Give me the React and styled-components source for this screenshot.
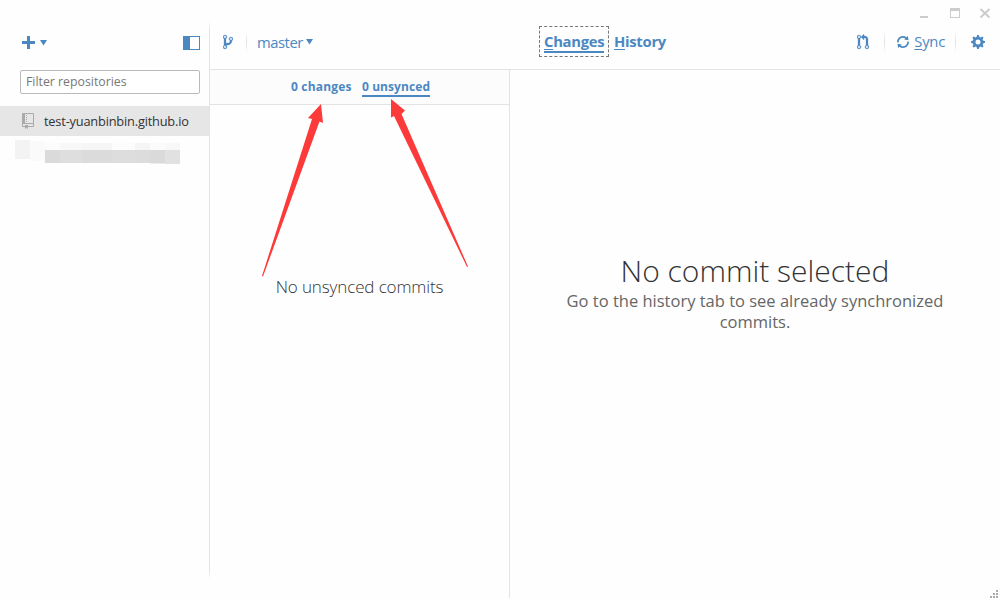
import React from "react";
import styled, { createGlobalStyle, css } from "styled-components";

const blue = "#4b88c2";

const GlobalStyle = createGlobalStyle`
  * { box-sizing: border-box; }
  body { margin: 0; background: #fefefe; font-family: "Open Sans", "Noto Sans", sans-serif; color: #333; overflow: hidden; }
`;

const Window = styled.div`
  position: relative;
  display: grid;
  grid-template-columns: 210px 1fr;
  width: 1000px;
  height: 600px;
`;

const Sidebar = styled.aside`
  display: flex;
  flex-direction: column;
  padding-top: 24px;
  background: linear-gradient(to bottom, transparent 21px, #e3e3e3 30px, #e3e3e3 571px, transparent 579px) right / 1px 100% no-repeat;
`;

const SideTools = styled.div`
  display: flex;
  align-items: center;
  height: 37px;
  margin-bottom: 1px;
  padding: 0 10px 0 22px;
  color: ${blue};
`;

const Icon = styled.svg`
  display: block;
  flex: none;
  fill: currentColor;
  margin-left: ${(p) => p.$left || 0}px;
`;

const WindowControls = styled(Icon)`
  color: #ccc;
`;

const Filter = styled.input`
  width: 180px;
  height: 24px;
  margin: 8px 0 12px 20px;
  padding: 0 5px 2px;
  border: 1px solid #bababa;
  border-radius: 2px;
  outline: none;
  background: #fff;
  font: 12.3px "Open Sans", sans-serif;
  &::placeholder { color: #777; opacity: 1; }
`;

const Repo = styled.div`
  display: flex;
  align-items: center;
  width: 209px;
  height: 30px;
  padding-left: 22px;
  background: #e6e6e6;
  color: #aaa;
`;

const RepoName = styled.span`
  margin-left: 9px;
  font-size: 12.8px;
  letter-spacing: -0.19px;
  color: #333;
  white-space: nowrap;
`;

const Redacted = styled.div`
  display: flex;
  margin: 4px 0 0 15px;
`;

const Mosaic = styled.div`
  display: grid;
  grid-template-columns: 15px 22px 30px 23px 15px 15px 15px;
  grid-template-rows: 7px 13px 1px;
  margin-top: 3px;
`;

const Block = styled.i`
  width: ${(p) => (p.$w ? `${p.$w}px` : "auto")};
  height: ${(p) => (p.$h ? `${p.$h}px` : "auto")};
  margin-top: ${(p) => p.$top || 0}px;
  background: ${(p) => p.$tone};
`;

const Main = styled.main`
  display: flex;
  flex-direction: column;
  min-width: 0;
`;

const TitleBar = styled.div`
  display: flex;
  justify-content: flex-end;
  height: 24px;
  padding: 8px 9px 0 0;
`;

const Toolbar = styled.header`
  display: grid;
  grid-template-columns: 329px 1fr auto;
  height: 46px;
  border-bottom: 1px solid #e3e3e3;
  color: ${blue};
`;

const Group = styled.div`
  display: flex;
  align-items: center;
  height: 36px;
`;

const Divider = styled.i`
  width: 1px;
  height: 22px;
  margin-left: ${(p) => p.$left}px;
  background: linear-gradient(transparent, #dedede 50%, transparent);
`;

const Label = styled.span`
  margin-left: ${(p) => p.$left}px;
  padding-bottom: ${(p) => p.$raise || 0}px;
  font-size: 14.8px;
  line-height: 20px;
  letter-spacing: ${(p) => p.$track || 0}px;
  white-space: nowrap;
`;

const Tab = styled.button`
  height: 31px;
  padding: 0 5px;
  border: 0;
  background: none;
  color: inherit;
  font: 700 14.8px/18px "Open Sans", sans-serif;
  letter-spacing: -0.28px;
  span { display: block; padding-bottom: 1px; border-bottom: 2px solid transparent; white-space: nowrap; }
  ${(p) => p.$active && css`
    width: 70px;
    margin-bottom: 2px;
    border: 1px dashed #777;
    padding: 2px 4px 0;
    span { border-color: ${blue}; }
  `}
`;

const Key = styled.u`
  text-decoration-thickness: 1px;
  text-underline-offset: 2px;
`;

const Body = styled.div`
  flex: 1;
  display: grid;
  grid-template-columns: 300px 1fr;
`;

const Commits = styled.section`
  display: flex;
  flex-direction: column;
  height: 528px;
  border-right: 1px solid #e3e3e3;
`;

const SubTabs = styled.nav`
  display: flex;
  height: 35px;
  padding: 8px 0 0 81px;
  background: #fcfcfc;
  border-bottom: 1px solid #e3e3e3;
`;

const SubTab = styled.a`
  height: 19px;
  width: ${(p) => p.$w}px;
  margin-right: 10px;
  border-bottom: 2px solid ${(p) => (p.$active ? blue : "transparent")};
  color: ${blue};
  font-size: 12px;
  font-weight: 700;
  line-height: 18px;
  letter-spacing: ${(p) => p.$track || 0}px;
  white-space: nowrap;
`;

const Empty = styled.p`
  margin: 169px 0 0;
  text-align: center;
  font-size: 17px;
  font-weight: 300;
  line-height: 26px;
  letter-spacing: -0.12px;
`;

const Detail = styled.section`
  padding: 181px 45px 0;
  text-align: center;
`;

const Headline = styled.h1`
  margin: 0;
  font-size: 30px;
  font-weight: 300;
  line-height: 40px;
  white-space: nowrap;
`;

const Hint = styled.p`
  margin: -1px 0 0;
  font-size: 16.5px;
  line-height: 21px;
  color: #666;
`;

const Arrows = styled.svg`
  position: absolute;
  left: 250px;
  top: 95px;
  fill: #fd3a3a;
`;

const Grip = styled.svg`
  position: absolute;
  right: 0;
  bottom: 0;
  fill: #aaa;
`;

const maskTones = [
  "#fcfcfc", "#f8f8f8", "#f6f6f6", "#fcfcfc", "#f5f5f5", "#fbfbfb", "#f8f8f8",
  "#dadada", "#dedede", "#dbdbdb", "#dedddd", "#dcdcdc", "#dadada", "#e1e1e1",
  "transparent", "transparent", "transparent", "transparent", "transparent", "#ececec", "#e1e1e1",
];

const Caret = ({ left }) => (
  <Icon $left={left} width="7" height="6" viewBox="0 0 7 6"><path d="M0 0h7L3.5 5.5z" /></Icon>
);

export default function App() {
  return (
    <Window>
      <GlobalStyle />
      <Sidebar>
        <SideTools>
          <Icon width="13" height="13" viewBox="0 0 13 13"><path d="M5 0h3v5h5v3H8v5H5V8H0V5h5z" /></Icon>
          <Caret left={5} />
          <Icon $left={136} width="17" height="14" viewBox="0 0 17 14"><path fillRule="evenodd" d="M0 0h17v14H0zM7 1v12h9V1z" /></Icon>
        </SideTools>
        <Filter placeholder="Filter repositories" />
        <Repo>
          <Icon width="13" height="16" viewBox="0 0 13 16">
            <path fillRule="evenodd" d="M1 0h10a1 1 0 0 1 1 1v12a1 1 0 0 1-1 1H6v2l-1.500-1.200L3 16v-2H1a1 1 0 0 1-1-1V1a1 1 0 0 1 1-1zM3 1v9h8V1zM1 11v2h2v-1h3v1h5v-2z" />
            <path d="M4 2h1v1H4zM4 4h1v1H4zM4 6h1v1H4zM4 8h1v1H4z" />
          </Icon>
          <RepoName>test-yuanbinbin.github.io</RepoName>
        </Repo>
        <Redacted>
          <Block $w={15} $h={19} $tone="#f3f3f3" />
          <Block $w={15} $h={20} $top={1} $tone="#fafafa" />
          <Mosaic>
            {maskTones.map((tone, i) => <Block key={i} $tone={tone} />)}
          </Mosaic>
        </Redacted>
      </Sidebar>
      <Main>
        <TitleBar>
          <WindowControls width="72" height="12" viewBox="0 0 72 12">
            <path fillRule="evenodd" d="M1 8h8v2H1zM31 0h10v10H31zM32 3v6h8V3z" />
            <path d="M61.500 1l9 8.500M70.500 1l-9 8.500" stroke="currentColor" strokeWidth="2" />
          </WindowControls>
        </TitleBar>
        <Toolbar>
          <Group>
            <Icon $left={13} width="10" height="16" viewBox="0 0 10 16"><path d="M10 5c0-1.110-.89-2-2-2a1.993 1.993 0 0 0-1 3.720v.3c-.02.52-.23.98-.63 1.380-.4.4-.86.61-1.380.63-.83.02-1.480.16-2 .45V4.720a1.993 1.993 0 0 0-1-3.720C.88 1 0 1.890 0 3a2 2 0 0 0 1 1.720v6.560c-.59.35-1 .99-1 1.720 0 1.110.89 2 2 2 1.110 0 2-.89 2-2 0-.53-.2-1-.53-1.360.09-.06.48-.41.59-.47.25-.11.56-.17.94-.17 1.050-.05 1.950-.45 2.750-1.250S8.950 7.770 9 6.730h-.02C9.590 6.370 10 5.730 10 5zM2 1.800c.66 0 1.200.55 1.200 1.200 0 .65-.55 1.200-1.200 1.200C1.350 4.200.8 3.650.8 3c0-.65.55-1.200 1.200-1.200zm0 12.410c-.66 0-1.200-.55-1.200-1.200 0-.65.55-1.200 1.200-1.200.65 0 1.200.55 1.200 1.200 0 .65-.55 1.200-1.200 1.200zm6-8c-.66 0-1.200-.55-1.200-1.200 0-.65.55-1.200 1.200-1.200.65 0 1.200.55 1.200 1.200 0 .65-.55 1.200-1.200 1.200z" stroke="currentColor" strokeWidth="0.3" /></Icon>
            <Divider $left={13} />
            <Label $left={10} $track={-0.45}>master</Label>
            <Caret left={3} />
          </Group>
          <Group>
            <Tab $active><span><Key>C</Key>hanges</span></Tab>
            <Tab><span><Key>H</Key>istory</span></Tab>
          </Group>
          <Group>
            <Icon width="12" height="16" viewBox="0 0 12 16"><path d="M11 11.280V5c-.03-.78-.34-1.470-.94-2.060C9.460 2.350 8.780 2.030 8 2H7V0L4 3l3 3V4h1c.27.02.48.11.69.31.21.2.3.42.31.69v6.280A1.993 1.993 0 0 0 10 15a1.993 1.993 0 0 0 1-3.720zm-1 2.920c-.66 0-1.200-.55-1.200-1.200 0-.65.55-1.200 1.200-1.200.65 0 1.200.55 1.200 1.200 0 .65-.55 1.200-1.200 1.200zM4 3c0-1.110-.89-2-2-2a1.993 1.993 0 0 0-1 3.720v6.560A1.993 1.993 0 0 0 2 15a1.993 1.993 0 0 0 1-3.720V4.720c.59-.34 1-.98 1-1.720zm-.8 10c0 .66-.55 1.200-1.200 1.200-.65 0-1.200-.55-1.200-1.200 0-.65.55-1.200 1.200-1.200.65 0 1.200.55 1.200 1.200zM2 4.200C1.340 4.200.8 3.650.8 3c0-.65.55-1.200 1.200-1.200.65 0 1.200.55 1.200 1.200 0 .65-.55 1.200-1.200 1.200z" stroke="currentColor" strokeWidth="0.3" /></Icon>
            <Divider $left={15} />
            <Icon $left={12} width="12" height="16" viewBox="0 0 12 16"><path d="M10.240 7.400a4.150 4.150 0 0 1-1.200 3.600 4.346 4.346 0 0 1-5.410.54L4.800 10.400.5 9.800l.6 4.200 1.310-1.260c2.360 1.740 5.700 1.570 7.840-.54a5.876 5.876 0 0 0 1.740-4.460l-1.750-.34zM2.960 5a4.346 4.346 0 0 1 5.410-.54L7.200 5.600l4.300.6-.6-4.200-1.310 1.260c-2.360-1.740-5.700-1.570-7.850.54C.5 5.030-.06 6.650.01 8.260l1.750.35A4.170 4.170 0 0 1 2.960 5z" /></Icon>
            <Label $left={5} $track={-0.25} $raise={2}><Key>S</Key>ync</Label>
            <Divider $left={10} />
            <Icon $left={15} width="29" height="16" viewBox="0 0 29 16"><path fillRule="evenodd" d="M14 8.770v-1.600l-1.940-.64-.45-1.090.88-1.840-1.130-1.130-1.810.91-1.090-.45-.69-1.920h-1.600l-.63 1.940-1.110.45-1.840-.88-1.130 1.130.91 1.810-.45 1.090L0 7.230v1.590l1.940.64.45 1.090-.88 1.840 1.130 1.130 1.810-.91 1.090.45.69 1.920h1.590l.63-1.940 1.110-.45 1.840.88 1.130-1.130-.92-1.810.47-1.090L14 8.750zM7 10.500a2.500 2.500 0 1 1 0-5 2.500 2.500 0 0 1 0 5z" /></Icon>
          </Group>
        </Toolbar>
        <Body>
          <Commits>
            <SubTabs>
              <SubTab $w={61} $track={0.18}>0 changes</SubTab>
              <SubTab $w={68} $track={0.08} $active>0 unsynced</SubTab>
            </SubTabs>
            <Empty>No unsynced commits</Empty>
          </Commits>
          <Detail>
            <Headline>No commit selected</Headline>
            <Hint>Go to the history tab to see already synchronized commits.</Hint>
          </Detail>
        </Body>
      </Main>
      <Arrows width="230" height="190" viewBox="0 0 230 190">
        <path d="M71 9L73 28L69.500 26.500L13 181.500L12 181L62 24L58 23zM141 4L155 15.500L151.500 19L218 171.500L217 172L144 21L141 22.500z" />
      </Arrows>
      <Grip width="10" height="10" viewBox="0 0 10 10"><path d="M6 0h2v2H6zM3 3h2v2H3zM6 3h2v2H6zM0 6h2v2H0zM3 6h2v2H3zM6 6h2v2H6z" /></Grip>
    </Window>
  );
}
